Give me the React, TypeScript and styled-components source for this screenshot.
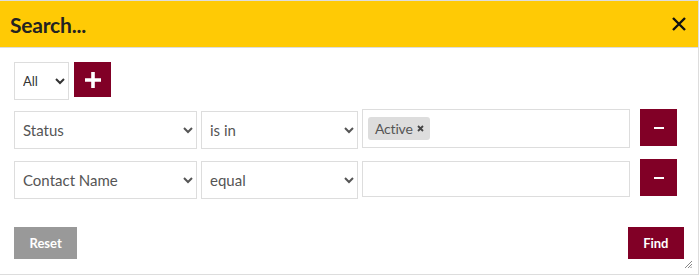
import styled, { createGlobalStyle } from "styled-components";

const GlobalStyle = createGlobalStyle`
  html, body {
    margin: 0;
    padding: 0;
    background: #ffffff;
    font-family: Lato, "Open Sans", "Liberation Sans", sans-serif;
  }
`;

const Dialog = styled.div`
  position: relative;
  width: 698px;
  height: 273px;
  border: 1px solid #dddddd;
  border-left: none;
  box-sizing: content-box;
  background: #fff;
`;

const Header = styled.div`
  height: 46px;
  background: #ffca05;
  border-bottom: 1px solid #dddddd;
  display: flex;
  align-items: center;
  justify-content: space-between;
  padding: 0 11px 0 10px;
`;

const Title = styled.h1`
  margin: 0;
  font-size: 21px;
  font-weight: 700;
  color: #222;
  letter-spacing: -0.2px;
`;

const Close = styled.button`
  border: none;
  background: none;
  padding: 0;
  width: 16px;
  height: 16px;
  display: flex;
  cursor: pointer;
`;

const Body = styled.div`
  padding: 14px 0 0 14px;
  display: flex;
  flex-direction: column;
`;

const Row = styled.div<{ $mt?: number }>`
  display: flex;
  align-items: flex-start;
  margin-top: ${(p) => p.$mt ?? 0}px;
`;

const Select = styled.select<{ $w: number }>`
  width: ${(p) => p.$w}px;
  height: 38px;
  border: 1px solid #dddddd;
  border-radius: 0;
  background: #fff;
  color: #555;
  font-family: Lato, "Open Sans", "Liberation Sans", sans-serif;
  font-size: 15px;
  padding: 0 4px;
  margin: 2px 4px 0 0;
  outline: none;
`;

const SmallSelect = styled(Select)`
  font-size: 13px;
  margin: 0 5px 0 0;
  color: #333;
`;

const ValueBox = styled.div<{ $h: number; $mt: number }>`
  width: 268px;
  height: ${(p) => p.$h}px;
  box-sizing: border-box;
  border: 1px solid #dddddd;
  display: flex;
  align-items: center;
  padding-left: 5px;
  margin-top: ${(p) => p.$mt}px;
  margin-right: 10px;
`;

const Chip = styled.span`
  display: inline-flex;
  align-items: center;
  gap: 4px;
  background: #dddddd;
  border-radius: 3px;
  height: 23px;
  padding: 0 6px 0 7px;
  color: #555;
  font-size: 14px;
  letter-spacing: -0.2px;
`;

const IconButton = styled.button`
  width: 37px;
  height: 37px;
  border: none;
  background: #810026;
  display: flex;
  align-items: center;
  justify-content: center;
  padding: 0;
  cursor: pointer;
`;

const PlusButton = styled(IconButton)`
  height: 35px;
`;

const Footer = styled.div`
  display: flex;
  justify-content: space-between;
  margin: 28px 14px 0 14px;
`;

const ActionButton = styled.button<{ $primary?: boolean }>`
  height: 32px;
  border: none;
  padding: 0 ${(p) => (p.$primary ? 15.5 : 15.5)}px;
  background: ${(p) => (p.$primary ? "#810026" : "#999999")};
  color: #fff;
  font-family: Lato, "Open Sans", "Liberation Sans", sans-serif;
  font-weight: 700;
  font-size: 13px;
  cursor: pointer;
`;

const Grip = styled.svg`
  position: absolute;
  right: 6px;
  bottom: 6px;
`;

function Minus() {
  return (
    <svg width="10" height="2" viewBox="0 0 10 2">
      <rect x="0" y="0" width="10" height="2" fill="#fff" />
    </svg>
  );
}

export default function App() {
  return (
    <>
      <GlobalStyle />
      <Dialog>
        <Header>
          <Title>Search...</Title>
          <Close aria-label="close">
            <svg width="16" height="16" viewBox="0 0 16 16">
              <path d="M2 2 L14 14 M14 2 L2 14" stroke="#111" strokeWidth="2.4" />
            </svg>
          </Close>
        </Header>
        <Body>
          <Row>
            <SmallSelect $w={55} defaultValue="All">
              <option>All</option>
              <option>Any</option>
            </SmallSelect>
            <PlusButton aria-label="add">
              <svg width="20" height="20" viewBox="0 0 20 20">
                <path d="M10 2 V18 M2 10 H18" stroke="#fff" strokeWidth="3.6" />
              </svg>
            </PlusButton>
          </Row>
          <Row $mt={9}>
            <Select $w={183} defaultValue="Status">
              <option>Status</option>
              <option>Contact Name</option>
            </Select>
            <Select $w={157} defaultValue="is in">
              <option>is in</option>
              <option>equal</option>
            </Select>
            <ValueBox $h={39} $mt={0}>
              <Chip>
                Active
                <svg width="7" height="7" viewBox="0 0 7 7">
                  <path d="M1 1 L6 6 M6 1 L1 6" stroke="#444" strokeWidth="1.8" />
                </svg>
              </Chip>
            </ValueBox>
            <IconButton aria-label="remove">
              <Minus />
            </IconButton>
          </Row>
          <Row $mt={10}>
            <Select $w={183} defaultValue="Contact Name">
              <option>Status</option>
              <option>Contact Name</option>
            </Select>
            <Select $w={157} defaultValue="equal">
              <option>is in</option>
              <option>equal</option>
            </Select>
            <ValueBox $h={36} $mt={2} />
            <IconButton aria-label="remove">
              <Minus />
            </IconButton>
          </Row>
        </Body>
        <Footer>
          <ActionButton>Reset</ActionButton>
          <ActionButton $primary>Find</ActionButton>
        </Footer>
        <Grip width="7" height="7" viewBox="0 0 7 7">
          <path d="M7 0 L0 7 M7 3 L3 7 M7 5.5 L5.5 7" stroke="#888" strokeWidth="1" />
        </Grip>
      </Dialog>
    </>
  );
}
